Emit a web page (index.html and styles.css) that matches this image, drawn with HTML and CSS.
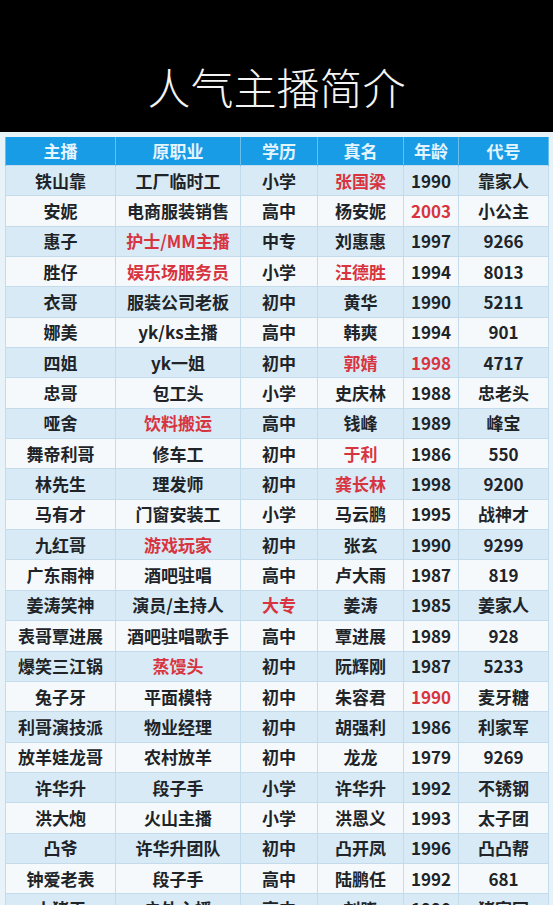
FILE: index.html
```html
<!DOCTYPE html>
<html lang="zh-CN">
<head>
<meta charset="utf-8">
<title>人气主播简介</title>
<link rel="stylesheet" href="styles.css">
</head>
<body>
<header class="banner"><h1 class="title">人气主播简介</h1></header>
<main class="sheet">
<table class="grid">
<colgroup><col class="c1"><col class="c2"><col class="c3"><col class="c4"><col class="c5"><col class="c6"></colgroup>
<thead><tr><th>主播</th><th>原职业</th><th>学历</th><th>真名</th><th>年龄</th><th>代号</th></tr></thead>
<tbody>
<tr><td>铁山靠</td><td>工厂临时工</td><td>小学</td><td class="red">张国梁</td><td>1990</td><td>靠家人</td></tr>
<tr><td>安妮</td><td>电商服装销售</td><td>高中</td><td>杨安妮</td><td class="red">2003</td><td>小公主</td></tr>
<tr><td>惠子</td><td class="red">护士/MM主播</td><td>中专</td><td>刘惠惠</td><td>1997</td><td>9266</td></tr>
<tr><td>胜仔</td><td class="red">娱乐场服务员</td><td>小学</td><td class="red">汪德胜</td><td>1994</td><td>8013</td></tr>
<tr><td>衣哥</td><td>服装公司老板</td><td>初中</td><td>黄华</td><td>1990</td><td>5211</td></tr>
<tr><td>娜美</td><td>yk/ks主播</td><td>高中</td><td>韩爽</td><td>1994</td><td>901</td></tr>
<tr><td>四姐</td><td>yk一姐</td><td>初中</td><td class="red">郭婧</td><td class="red">1998</td><td>4717</td></tr>
<tr><td>忠哥</td><td>包工头</td><td>小学</td><td>史庆林</td><td>1988</td><td>忠老头</td></tr>
<tr><td>哑舍</td><td class="red">饮料搬运</td><td>高中</td><td>钱峰</td><td>1989</td><td>峰宝</td></tr>
<tr><td>舞帝利哥</td><td>修车工</td><td>初中</td><td class="red">于利</td><td>1986</td><td>550</td></tr>
<tr><td>林先生</td><td>理发师</td><td>初中</td><td class="red">龚长林</td><td>1998</td><td>9200</td></tr>
<tr><td>马有才</td><td>门窗安装工</td><td>小学</td><td>马云鹏</td><td>1995</td><td>战神才</td></tr>
<tr><td>九红哥</td><td class="red">游戏玩家</td><td>初中</td><td>张玄</td><td>1990</td><td>9299</td></tr>
<tr><td>广东雨神</td><td>酒吧驻唱</td><td>高中</td><td>卢大雨</td><td>1987</td><td>819</td></tr>
<tr><td>姜涛笑神</td><td>演员/主持人</td><td class="red">大专</td><td>姜涛</td><td>1985</td><td>姜家人</td></tr>
<tr><td>表哥覃进展</td><td>酒吧驻唱歌手</td><td>高中</td><td>覃进展</td><td>1989</td><td>928</td></tr>
<tr><td>爆笑三江锅</td><td class="red">蒸馒头</td><td>初中</td><td>阮辉刚</td><td>1987</td><td>5233</td></tr>
<tr><td>兔子牙</td><td>平面模特</td><td>初中</td><td>朱容君</td><td class="red">1990</td><td>麦牙糖</td></tr>
<tr><td>利哥演技派</td><td>物业经理</td><td>初中</td><td>胡强利</td><td>1986</td><td>利家军</td></tr>
<tr><td>放羊娃龙哥</td><td>农村放羊</td><td>初中</td><td>龙龙</td><td>1979</td><td>9269</td></tr>
<tr><td>许华升</td><td>段子手</td><td>小学</td><td>许华升</td><td>1992</td><td>不锈钢</td></tr>
<tr><td>洪大炮</td><td>火山主播</td><td>小学</td><td>洪恩义</td><td>1993</td><td>太子团</td></tr>
<tr><td>凸爷</td><td>许华升团队</td><td>初中</td><td>凸开凤</td><td>1996</td><td>凸凸帮</td></tr>
<tr><td>钟爱老表</td><td>段子手</td><td>高中</td><td>陆鹏任</td><td>1992</td><td>681</td></tr>
<tr><td>小猪王</td><td>户外主播</td><td>高中</td><td>刘晓</td><td>1990</td><td>猪家园</td></tr>
</tbody>
</table>
</main>
</body>
</html>
```
FILE: styles.css
```css
* { box-sizing: border-box; }
html, body {
  margin: 0;
  padding: 0;
  height: 905px;
  overflow: hidden;
  background: #e8f3f9;
  font-family: "Noto Sans CJK SC", "Noto Sans", sans-serif;
}
.banner {
  height: 132px;
  background: #000;
  display: flex;
  align-items: flex-end;
  justify-content: center;
  padding-bottom: 20px;
}
.title {
  margin: 0;
  color: #f4f4f4;
  font-size: 43px;
  font-weight: 300;
  letter-spacing: 0;
  line-height: 52px;
}
.sheet {
  padding: 5px 5px 0 5px;
}
.grid {
  width: 543px;
  border-collapse: collapse;
  table-layout: fixed;
}
.c1 { width: 110px; }
.c2 { width: 125px; }
.c3 { width: 77px; }
.c4 { width: 86px; }
.c5 { width: 55px; }
.c6 { width: 90px; }
.grid th {
  height: 28px;
  padding: 0;
  background: #189ce6;
  color: #e4f5ff;
  font-size: 17px;
  font-weight: 700;
  border-left: 1px solid #6bbdea;
  border-right: 1px solid #6bbdea;
  line-height: 28px;
}
.grid td {
  height: 30.35px;
  padding: 0;
  text-align: center;
  font-size: 17px;
  font-weight: 700;
  color: #202428;
  border: 1px solid #c3dbea;
  line-height: 28px;
  white-space: nowrap;
}
.grid tbody tr:nth-child(odd) td { background: #d8eaf5; }
.grid tbody tr:nth-child(even) td { background: #f6f9fb; }
.grid td.red { color: #d8343f; }
```
